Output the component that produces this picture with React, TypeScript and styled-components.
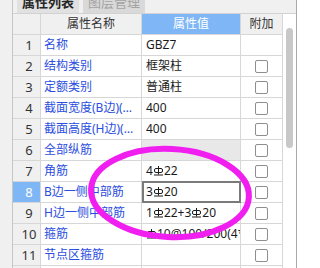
import React from "react";
import styled, { createGlobalStyle, css } from "styled-components";

const GlobalStyle = createGlobalStyle`
  html, body { margin: 0; padding: 0; background: #ffffff; }
  body { font-family: "Noto Sans", "Noto Sans CJK SC", sans-serif; }
`;

const Frame = styled.div`
  position: relative;
  width: 300px;
  height: 268px;
  overflow: hidden;
  display: flex;
  background: #ffffff;
  font-size: 12px;
`;

const LeftStrip = styled.div`
  flex: 0 0 12px;
  background: #f0f0f0;
  border-right: 1px solid #c6c6c6;
`;

const Panel = styled.div`
  flex: 0 0 283px;
  display: flex;
  flex-direction: column;
  min-width: 0;
`;

const TabBar = styled.div`
  flex: 0 0 13px;
  height: 13px;
  border-bottom: 1px solid #d2d2d2;
  background: #f0f0f0;
  display: flex;
  gap: 4px;
  padding-left: 4px;
  overflow: hidden;
`;

const Tab = styled.div<{ $active?: boolean }>`
  margin-top: -5px;
  height: 18px;
  padding: 0 5px;
  line-height: 13px;
  font-size: 13px;
  font-family: "Noto Sans CJK SC", sans-serif;
  white-space: nowrap;
  background: ${(p) => (p.$active ? "#e1e1e1" : "#d9d9d9")};
  color: ${(p) => (p.$active ? "#262626" : "#a3a3a3")};
  font-weight: ${(p) => (p.$active ? 600 : 400)};
`;

const Body = styled.div`
  flex: 1;
  display: flex;
  min-height: 0;
`;

const Grid = styled.div`
  flex: 0 0 270px;
  display: grid;
  grid-template-columns: 28px 101px 99px 42px;
  grid-auto-rows: 21px;
  align-content: start;
`;

const Cell = styled.div`
  box-sizing: border-box;
  border-right: 1px solid #d7d7d7;
  border-bottom: 1px solid #d7d7d7;
  display: flex;
  align-items: center;
  overflow: hidden;
  white-space: nowrap;
  min-width: 0;
  line-height: 14px;
`;

const HeaderCell = styled(Cell)<{ $accent?: boolean }>`
  justify-content: center;
  background: ${(p) => (p.$accent ? "#7fb6f6" : "#f0f0f0")};
  color: ${(p) => (p.$accent ? "#ffffff" : "#333333")};
`;

const IndexCell = styled(Cell)<{ $selected?: boolean }>`
  justify-content: center;
  padding-left: 5px;
  font-size: 13px;
  background: ${(p) => (p.$selected ? "#7fb6f6" : "#f0f0f0")};
  color: ${(p) => (p.$selected ? "#ffffff" : "#333333")};
`;

const NameCell = styled(Cell)`
  padding-left: 3px;
  padding-right: 3px;
  color: #2b4de0;
  background: #ffffff;
`;

const NameText = styled.span`
  overflow: hidden;
  text-overflow: ellipsis;
  white-space: nowrap;
  min-width: 0;
`;

const ValueCell = styled(Cell)<{ $muted?: boolean; $editing?: boolean }>`
  position: relative;
  overflow: visible;
  padding-left: 4px;
  color: #1b1b1b;
  background: ${(p) => (p.$muted ? "#e8e8e8" : "#ffffff")};
  ${(p) =>
    p.$editing &&
    css`
      &::after {
        content: "";
        position: absolute;
        top: -1px;
        left: 0;
        right: -1px;
        bottom: -1px;
        border: 2px solid #7a7a7a;
        pointer-events: none;
      }
    `}
`;

const ValueText = styled.span`
  display: flex;
  align-items: center;
  overflow: hidden;
  white-space: nowrap;
  min-width: 0;
  max-width: 100%;
`;

const AttachCell = styled(Cell)`
  justify-content: center;
  background: #ffffff;
`;

const Checkbox = styled.span`
  box-sizing: border-box;
  width: 13px;
  height: 13px;
  border: 1px solid #8e8e8e;
  border-radius: 2px;
  background: #ffffff;
`;

const Scroll = styled.div`
  flex: 0 0 13px;
  box-sizing: border-box;
  background: #ffffff;
  padding: 14px 0 0 3px;
`;

const Thumb = styled.div`
  width: 7px;
  height: 120px;
  border-radius: 4px;
  background: #c8c8c8;
`;

const RightLine = styled.div`
  flex: 0 0 1px;
  background: #a9a9a9;
`;

const RightFill = styled.div`
  flex: 1;
  background: #ffffff;
`;

const Overlay = styled.svg`
  position: absolute;
  left: 0;
  top: 0;
  pointer-events: none;
`;

const SymbolSvg = styled.svg`
  flex: 0 0 auto;
  margin: 0 1px 1px 1px;
`;

const Rebar = () => (
  <SymbolSvg width="9" height="10" viewBox="0 0 9 10" fill="none" stroke="currentColor" strokeWidth="1">
    <line x1="4.5" y1="0" x2="4.5" y2="8.5" />
    <rect x="0.5" y="2.5" width="8" height="4" rx="1.5" />
    <line x1="0" y1="9" x2="9" y2="9" />
  </SymbolSvg>
);

type Row = {
  name: string;
  value: string;
  check: boolean;
  muted?: boolean;
  editing?: boolean;
};

const rows: Row[] = [
  { name: "名称", value: "GBZ7", check: false },
  { name: "结构类别", value: "框架柱", check: true },
  { name: "定额类别", value: "普通柱", check: true },
  { name: "截面宽度(B边)(mm)", value: "400", check: true },
  { name: "截面高度(H边)(mm)", value: "400", check: true },
  { name: "全部纵筋", value: "", check: true, muted: true },
  { name: "角筋", value: "4%22", check: true },
  { name: "B边一侧中部筋", value: "3%20", check: true, editing: true },
  { name: "H边一侧中部筋", value: "1%22+3%20", check: true },
  { name: "箍筋", value: "%10@100/200(4*4)", check: true },
  { name: "节点区箍筋", value: "", check: true },
  { name: "箍筋肢数", value: "4*4", check: true },
];

const renderValue = (v: string) => {
  const parts = v.split("%");
  const out: React.ReactNode[] = [];
  parts.forEach((p, i) => {
    if (i > 0) out.push(<Rebar key={`s${i}`} />);
    if (p) out.push(<span key={`t${i}`}>{p}</span>);
  });
  return out;
};

export default function App() {
  return (
    <>
      <GlobalStyle />
      <Frame>
        <LeftStrip />
        <Panel>
          <TabBar>
            <Tab $active>属性列表</Tab>
            <Tab>图层管理</Tab>
          </TabBar>
          <Body>
            <Grid>
              <HeaderCell />
              <HeaderCell>属性名称</HeaderCell>
              <HeaderCell $accent>属性值</HeaderCell>
              <HeaderCell>附加</HeaderCell>
              {rows.map((r, i) => (
                <React.Fragment key={i}>
                  <IndexCell $selected={r.editing}>{i + 1}</IndexCell>
                  <NameCell>
                    <NameText>{r.name}</NameText>
                  </NameCell>
                  <ValueCell $muted={r.muted} $editing={r.editing}>
                    <ValueText>{renderValue(r.value)}</ValueText>
                  </ValueCell>
                  <AttachCell>{r.check && <Checkbox />}</AttachCell>
                </React.Fragment>
              ))}
            </Grid>
            <Scroll>
              <Thumb />
            </Scroll>
          </Body>
        </Panel>
        <RightLine />
        <RightFill />
        <Overlay width="300" height="268" viewBox="0 0 300 268">
          <ellipse
            cx="170"
            cy="193"
            rx="79"
            ry="44"
            transform="rotate(3 170 193)"
            fill="none"
            stroke="#f01ff0"
            strokeWidth="6"
          />
        </Overlay>
      </Frame>
    </>
  );
}
